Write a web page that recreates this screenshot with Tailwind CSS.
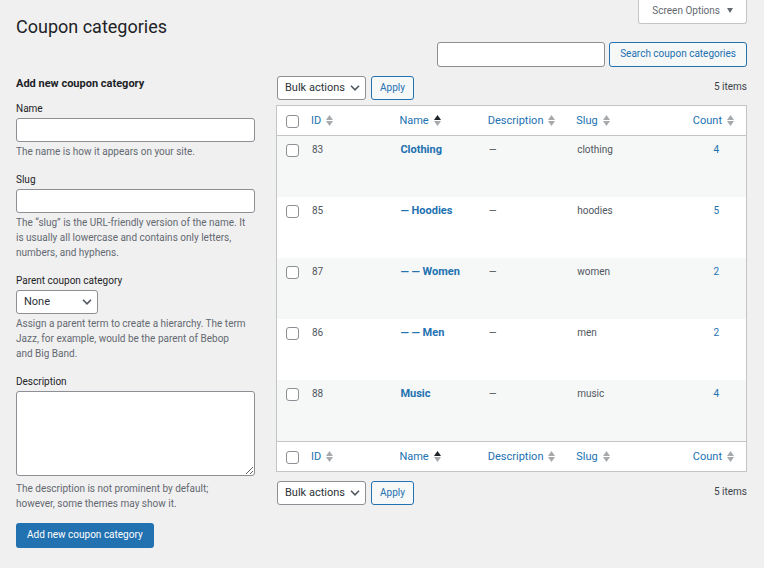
<!DOCTYPE html>
<html lang="en">
  <head>
    <meta charset="UTF-8" />
    <meta name="viewport" content="width=device-width, initial-scale=1.0" />
    <title>Coupon categories</title>
    <script src="https://cdn.jsdelivr.net/npm/@tailwindcss/browser@4"></script>
  </head>
  <body class="bg-[#f0f0f0] min-h-screen pl-4 pr-[17px] pb-5 font-['Roboto',sans-serif] text-[10px] leading-4 text-[#3c434a]">
    <!-- Sort arrows and chevron, reused below -->
    <svg class="hidden">
      <symbol id="sort" viewBox="0 0 7 11">
        <path d="M3.5 0L7 5H0z" />
        <path d="M3.5 11L0 6h7z" fill="#a7aaad" />
      </symbol>
      <symbol id="chevron" viewBox="0 0 10 6">
        <path d="M1 .8l4 4 4-4" fill="none" stroke="#50575e" stroke-width="1.6" />
      </symbol>
    </svg>

    <!-- Page header -->
    <header class="flex items-start justify-between h-[42px]">
      <h1 class="pt-[15px] text-lg leading-6 text-[#1d2327]">Coupon categories</h1>
      <button type="button" class="flex items-center gap-[7px] h-6 px-[13px] pb-[2px] bg-white border border-t-0 border-[#c3c4c7] rounded-b-[3px] text-[#646970]">
        Screen Options
        <svg class="w-[6px] h-[5px]" viewBox="0 0 6 5"><path d="M0 0h6L3 5z" fill="#646970" /></svg>
      </button>
    </header>

    <!-- Search -->
    <form class="flex justify-end gap-1">
      <input type="search" aria-label="Search coupon categories" class="w-[168px] h-[25px] px-2 bg-white border border-[#8c8f94] rounded-[3px]" />
      <button type="submit" class="h-[25px] px-[10px] pb-[2px] bg-[#f6f7f7] border border-[#2271b1] rounded-[3px] text-[#2271b1]">Search coupon categories</button>
    </form>

    <main class="grid grid-cols-[239fr_471fr] gap-[21px] pt-2">
      <!-- Add form -->
      <form>
        <h2 class="pt-px mb-2 text-[11px] leading-4 font-bold text-[#1d2327]">Add new coupon category</h2>
        <div class="flex flex-col gap-3">
          <div>
            <label for="name" class="block pt-px mb-px text-[#1d2327]">Name</label>
            <input id="name" type="text" class="block w-full h-6 px-2 bg-white border border-[#8c8f94] rounded-[3px]" />
            <p class="mt-[2px] pr-2 leading-[15px] text-[#646970]">The name is how it appears on your site.</p>
          </div>
          <div>
            <label for="slug" class="block pt-px mb-px text-[#1d2327]">Slug</label>
            <input id="slug" type="text" class="block w-full h-6 px-2 bg-white border border-[#8c8f94] rounded-[3px]" />
            <p class="mt-[2px] pr-2 leading-[15px] text-[#646970]">The “slug” is the URL-friendly version of the name. It is usually all lowercase and contains only letters, numbers, and hyphens.</p>
          </div>
          <div>
            <label for="parent" class="block pt-px mb-px text-[#1d2327]">Parent coupon category</label>
            <div class="relative w-[82px]">
              <select id="parent" class="block appearance-none w-full h-6 pl-[7px] pr-5 pb-px bg-white border border-[#8c8f94] rounded-[3px] text-[11px] text-[#2c3338]">
                <option>None</option>
              </select>
              <svg class="absolute right-[6px] top-[9px] w-[10px] h-[6px] pointer-events-none"><use href="#chevron" /></svg>
            </div>
            <p class="mt-[2px] pr-2 leading-[15px] text-[#646970]">Assign a parent term to create a hierarchy. The term Jazz, for example, would be the parent of Bebop and Big Band.</p>
          </div>
          <div>
            <label for="description" class="block pt-px mb-px text-[#1d2327]">Description</label>
            <textarea id="description" class="block w-full h-[85px] px-2 py-1 bg-white border border-[#8c8f94] rounded-[3px]"></textarea>
            <p class="mt-[5px] pr-2 leading-[15px] text-[#646970]">The description is not prominent by default; however, some themes may show it.</p>
          </div>
          <button type="submit" class="self-start h-[25px] px-[11px] pb-[2px] bg-[#2271b1] rounded-[3px] text-white">Add new coupon category</button>
        </div>
      </form>

      <!-- Category list -->
      <section class="pt-px">
        <div class="flex items-center gap-[5px] pl-px mb-[5px]">
          <div class="relative w-[89px]">
            <select aria-label="Bulk actions" class="block appearance-none w-full h-6 pl-[7px] pr-5 pb-px bg-white border border-[#8c8f94] rounded-[3px] text-[11px] text-[#2c3338]">
              <option>Bulk actions</option>
            </select>
            <svg class="absolute right-[6px] top-[9px] w-[10px] h-[6px] pointer-events-none"><use href="#chevron" /></svg>
          </div>
          <button type="button" class="w-[43px] h-6 pb-px bg-[#f6f7f7] border border-[#2271b1] rounded-[3px] text-[#2271b1]">Apply</button>
          <span class="ml-auto pb-[2px]">5 items</span>
        </div>

        <table class="w-full table-fixed border border-[#c3c4c7] border-separate border-spacing-0 bg-white text-left text-[#50575e]">
          <thead class="text-[11px] text-[#2271b1]">
            <tr class="h-[30px] [&>*]:border-b [&>*]:border-[#c3c4c7] [&>*]:font-normal">
              <td class="w-[27px] pl-[9px] pt-[2px]"><input type="checkbox" aria-label="Select all" class="block appearance-none size-[13px] bg-white border border-[#8c8f94] rounded-[3px]" /></td>
              <th class="pl-[7px]"><a href="#" class="flex items-center gap-[5px]">ID <svg class="w-[7px] h-[11px] fill-[#a7aaad]"><use href="#sort" /></svg></a></th>
              <th class="pl-[7px]"><a href="#" class="flex items-center gap-[5px]">Name <svg class="w-[7px] h-[11px] fill-[#1d2327]"><use href="#sort" /></svg></a></th>
              <th class="pl-[7px]"><a href="#" class="flex items-center gap-[5px]">Description <svg class="w-[7px] h-[11px] fill-[#a7aaad]"><use href="#sort" /></svg></a></th>
              <th class="pl-[7px]"><a href="#" class="flex items-center gap-[5px]">Slug <svg class="w-[7px] h-[11px] fill-[#a7aaad]"><use href="#sort" /></svg></a></th>
              <th class="pr-3"><a href="#" class="flex items-center justify-end gap-[5px]">Count <svg class="w-[7px] h-[11px] fill-[#a7aaad]"><use href="#sort" /></svg></a></th>
            </tr>
          </thead>
          <tbody>
            <tr class="h-[61px] align-top odd:bg-[#f6f7f7] [&>td]:pt-[6px]">
              <td class="pl-[9px]"><input type="checkbox" aria-label="Select Clothing" class="block appearance-none mt-[2px] size-[13px] bg-white border border-[#8c8f94] rounded-[3px]" /></td>
              <td class="pl-2">83</td>
              <td class="pl-2 text-[11px] leading-4"><a href="#" class="font-bold text-[#2271b1]">Clothing</a></td>
              <td class="pl-2">—</td>
              <td class="pl-2">clothing</td>
              <td class="pl-[29px] text-center"><a href="#" class="text-[#2271b1]">4</a></td>
            </tr>
            <tr class="h-[61px] align-top odd:bg-[#f6f7f7] [&>td]:pt-[6px]">
              <td class="pl-[9px]"><input type="checkbox" aria-label="Select Hoodies" class="block appearance-none mt-[2px] size-[13px] bg-white border border-[#8c8f94] rounded-[3px]" /></td>
              <td class="pl-2">85</td>
              <td class="pl-2 text-[11px] leading-4"><a href="#" class="font-bold text-[#2271b1]">— Hoodies</a></td>
              <td class="pl-2">—</td>
              <td class="pl-2">hoodies</td>
              <td class="pl-[29px] text-center"><a href="#" class="text-[#2271b1]">5</a></td>
            </tr>
            <tr class="h-[61px] align-top odd:bg-[#f6f7f7] [&>td]:pt-[6px]">
              <td class="pl-[9px]"><input type="checkbox" aria-label="Select Women" class="block appearance-none mt-[2px] size-[13px] bg-white border border-[#8c8f94] rounded-[3px]" /></td>
              <td class="pl-2">87</td>
              <td class="pl-2 text-[11px] leading-4"><a href="#" class="font-bold text-[#2271b1]">— — Women</a></td>
              <td class="pl-2">—</td>
              <td class="pl-2">women</td>
              <td class="pl-[29px] text-center"><a href="#" class="text-[#2271b1]">2</a></td>
            </tr>
            <tr class="h-[61px] align-top odd:bg-[#f6f7f7] [&>td]:pt-[6px]">
              <td class="pl-[9px]"><input type="checkbox" aria-label="Select Men" class="block appearance-none mt-[2px] size-[13px] bg-white border border-[#8c8f94] rounded-[3px]" /></td>
              <td class="pl-2">86</td>
              <td class="pl-2 text-[11px] leading-4"><a href="#" class="font-bold text-[#2271b1]">— — Men</a></td>
              <td class="pl-2">—</td>
              <td class="pl-2">men</td>
              <td class="pl-[29px] text-center"><a href="#" class="text-[#2271b1]">2</a></td>
            </tr>
            <tr class="h-[61px] align-top odd:bg-[#f6f7f7] [&>td]:pt-[6px]">
              <td class="pl-[9px]"><input type="checkbox" aria-label="Select Music" class="block appearance-none mt-[2px] size-[13px] bg-white border border-[#8c8f94] rounded-[3px]" /></td>
              <td class="pl-2">88</td>
              <td class="pl-2 text-[11px] leading-4"><a href="#" class="font-bold text-[#2271b1]">Music</a></td>
              <td class="pl-2">—</td>
              <td class="pl-2">music</td>
              <td class="pl-[29px] text-center"><a href="#" class="text-[#2271b1]">4</a></td>
            </tr>
          </tbody>
          <tfoot class="text-[11px] text-[#2271b1]">
            <tr class="h-[30px] [&>*]:border-t [&>*]:border-[#c3c4c7] [&>*]:font-normal">
              <td class="pl-[9px] pt-[2px]"><input type="checkbox" aria-label="Select all" class="block appearance-none size-[13px] bg-white border border-[#8c8f94] rounded-[3px]" /></td>
              <th class="pl-[7px]"><a href="#" class="flex items-center gap-[5px]">ID <svg class="w-[7px] h-[11px] fill-[#a7aaad]"><use href="#sort" /></svg></a></th>
              <th class="pl-[7px]"><a href="#" class="flex items-center gap-[5px]">Name <svg class="w-[7px] h-[11px] fill-[#1d2327]"><use href="#sort" /></svg></a></th>
              <th class="pl-[7px]"><a href="#" class="flex items-center gap-[5px]">Description <svg class="w-[7px] h-[11px] fill-[#a7aaad]"><use href="#sort" /></svg></a></th>
              <th class="pl-[7px]"><a href="#" class="flex items-center gap-[5px]">Slug <svg class="w-[7px] h-[11px] fill-[#a7aaad]"><use href="#sort" /></svg></a></th>
              <th class="pr-3"><a href="#" class="flex items-center justify-end gap-[5px]">Count <svg class="w-[7px] h-[11px] fill-[#a7aaad]"><use href="#sort" /></svg></a></th>
            </tr>
          </tfoot>
        </table>

        <div class="flex items-center gap-[5px] pl-px mt-[9px]">
          <div class="relative w-[89px]">
            <select aria-label="Bulk actions" class="block appearance-none w-full h-6 pl-[7px] pr-5 pb-px bg-white border border-[#8c8f94] rounded-[3px] text-[11px] text-[#2c3338]">
              <option>Bulk actions</option>
            </select>
            <svg class="absolute right-[6px] top-[9px] w-[10px] h-[6px] pointer-events-none"><use href="#chevron" /></svg>
          </div>
          <button type="button" class="w-[43px] h-6 pb-px bg-[#f6f7f7] border border-[#2271b1] rounded-[3px] text-[#2271b1]">Apply</button>
          <span class="ml-auto pb-[2px]">5 items</span>
        </div>
      </section>
    </main>
  </body>
</html>
